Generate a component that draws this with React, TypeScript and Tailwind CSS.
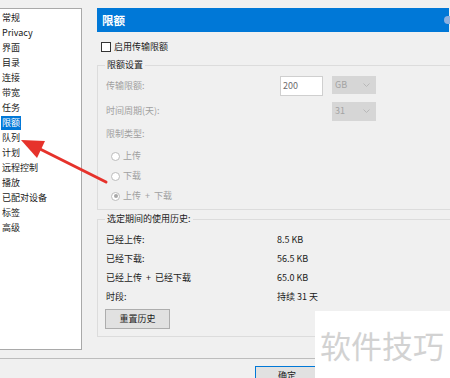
const navItems = [
  "常规",
  "Privacy",
  "界面",
  "目录",
  "连接",
  "带宽",
  "任务",
  "限额",
  "队列",
  "计划",
  "远程控制",
  "播放",
  "已配对设备",
  "标签",
  "高级",
];

const history = [
  ["已经上传:", "8.5 KB"],
  ["已经下载:", "56.5 KB"],
  ["已经上传 + 已经下载", "65.0 KB"],
  ["时段:", "持续 31 天"],
];

function Chevron() {
  return (
    <svg width="7" height="4" viewBox="0 0 7 4" className="ml-auto mr-[6px]">
      <path d="M0.5 0.5 L3.5 3.5 L6.5 0.5" fill="none" stroke="#b8b8b8" strokeWidth="1" />
    </svg>
  );
}

function Radio({ label, checked }: { label: string; checked?: boolean }) {
  return (
    <div className="flex h-[20px] items-center pl-[5px]">
      <span className="flex h-[9px] w-[9px] items-center justify-center rounded-full border border-[#bcbcbc] bg-white">
        {checked && <span className="h-[4px] w-[4px] rounded-full bg-[#a8a8a8]" />}
      </span>
      <span className="ml-[3px] text-[#a0a0a0] [word-spacing:2px]">{label}</span>
    </div>
  );
}

export default function App() {
  return (
    <div className="relative h-[378px] w-[450px] overflow-hidden bg-[#f0f0f0] font-[Noto_Sans_CJK_SC,sans-serif] text-[9px] leading-[12px] text-[#1a1a1a]">
      <div className="flex pt-[8px]">
        {/* left nav list */}
        <div className="h-[342px] w-[82px] shrink-0 border-t border-r border-b border-[#a9a9a9] bg-white pt-[1px]">
          {navItems.map((item) => (
            <div key={item} className="flex h-[15px] items-center pl-[1px]">
              {item === "限额" ? (
                <span className="bg-[#0078d7] px-[1px] leading-[14px] text-white">{item}</span>
              ) : (
                <span className="px-[1px]">{item}</span>
              )}
            </div>
          ))}
        </div>

        {/* right settings page */}
        <div className="ml-[15px] w-[365px] shrink-0">
          <div className="flex h-[24px] w-[352px] items-center bg-[#0078d7] pl-[5px]">
            <span className="text-[11.5px] font-bold text-white">限额</span>
            <span className="ml-auto mr-[-1px] h-[8px] w-[6px] rounded-l-full bg-[#8db0df]" />
          </div>

          <div className="mt-[9px] flex h-[12px] items-center pl-[4px]">
            <span className="h-[10px] w-[10px] border border-[#333] bg-white" />
            <span className="ml-[3px]">启用传输限额</span>
          </div>

          <fieldset className="mt-[6px] border border-[#dcdcdc] pl-[7px] pb-[3px]">
            <legend className="px-[2px] leading-[12px]">限额设置</legend>
            <div className="pl-[1px] pt-[5px]">
              <div className="flex h-[20px] items-center">
                <span className="w-[174px] text-[#a0a0a0]">传输限额:</span>
                <div className="flex h-[20px] w-[43px] items-center border border-[#cfcfcf] bg-white pl-[2px] text-[#6d6d6d]">
                  200
                </div>
                <div className="ml-[9px] flex h-[18px] w-[44px] items-center self-start bg-[#d6d6d6] pl-[3px] text-[#a3a3a3]">
                  GB
                  <Chevron />
                </div>
              </div>
              <div className="mt-[5px] flex h-[20px] items-center">
                <span className="w-[226px] text-[#a0a0a0]">时间周期(天):</span>
                <div className="flex h-[19px] w-[44px] items-center bg-[#d6d6d6] pl-[3px] text-[#a3a3a3]">
                  31
                  <Chevron />
                </div>
              </div>
              <div className="mt-[7px] text-[#a0a0a0]">限制类型:</div>
              <div className="mt-[6px]">
                <Radio label="上传" />
                <Radio label="下载" />
                <Radio label="上传 + 下载" checked />
              </div>
            </div>
          </fieldset>

          <fieldset className="mt-[3px] border border-[#dcdcdc] pl-[7px] pb-[7px]">
            <legend className="px-[2px] leading-[12px]">选定期间的使用历史:</legend>
            <div className="pl-[1px] pt-[5px]">
              {history.map(([label, value]) => (
                <div key={label} className="flex h-[19px] items-center">
                  <span className="w-[171px] [word-spacing:2px]">{label}</span>
                  <span>{value}</span>
                </div>
              ))}
              <button className="ml-[-1px] mt-[3px] flex h-[20px] w-[65px] items-center justify-center border border-[#adadad] bg-[#e1e1e1]">
                重置历史
              </button>
            </div>
          </fieldset>
        </div>
      </div>

      <div className="mt-[8px] h-px bg-[#bdbdbd]" />
      <button className="ml-[255px] mt-[7px] flex h-[24px] w-[64px] items-start justify-center border border-[#0078d7] bg-[#e1e1e1] pt-[3px]">
        确定
      </button>

      {/* watermark */}
      <div className="absolute left-[315px] top-[311px] flex h-[67px] w-[135px] items-center bg-white pl-[5px] text-[31px] leading-[34px] text-[#d2d2d2]">
        软件技巧
      </div>

      {/* red annotation arrow */}
      <svg className="pointer-events-none absolute left-0 top-0" width="450" height="378" viewBox="0 0 450 378">
        <line x1="106" y1="182" x2="38" y2="148" stroke="#e6322b" strokeWidth="3" strokeLinecap="round" />
        <polygon points="21,140 45,141 37,158" fill="#e6322b" />
      </svg>
    </div>
  );
}
